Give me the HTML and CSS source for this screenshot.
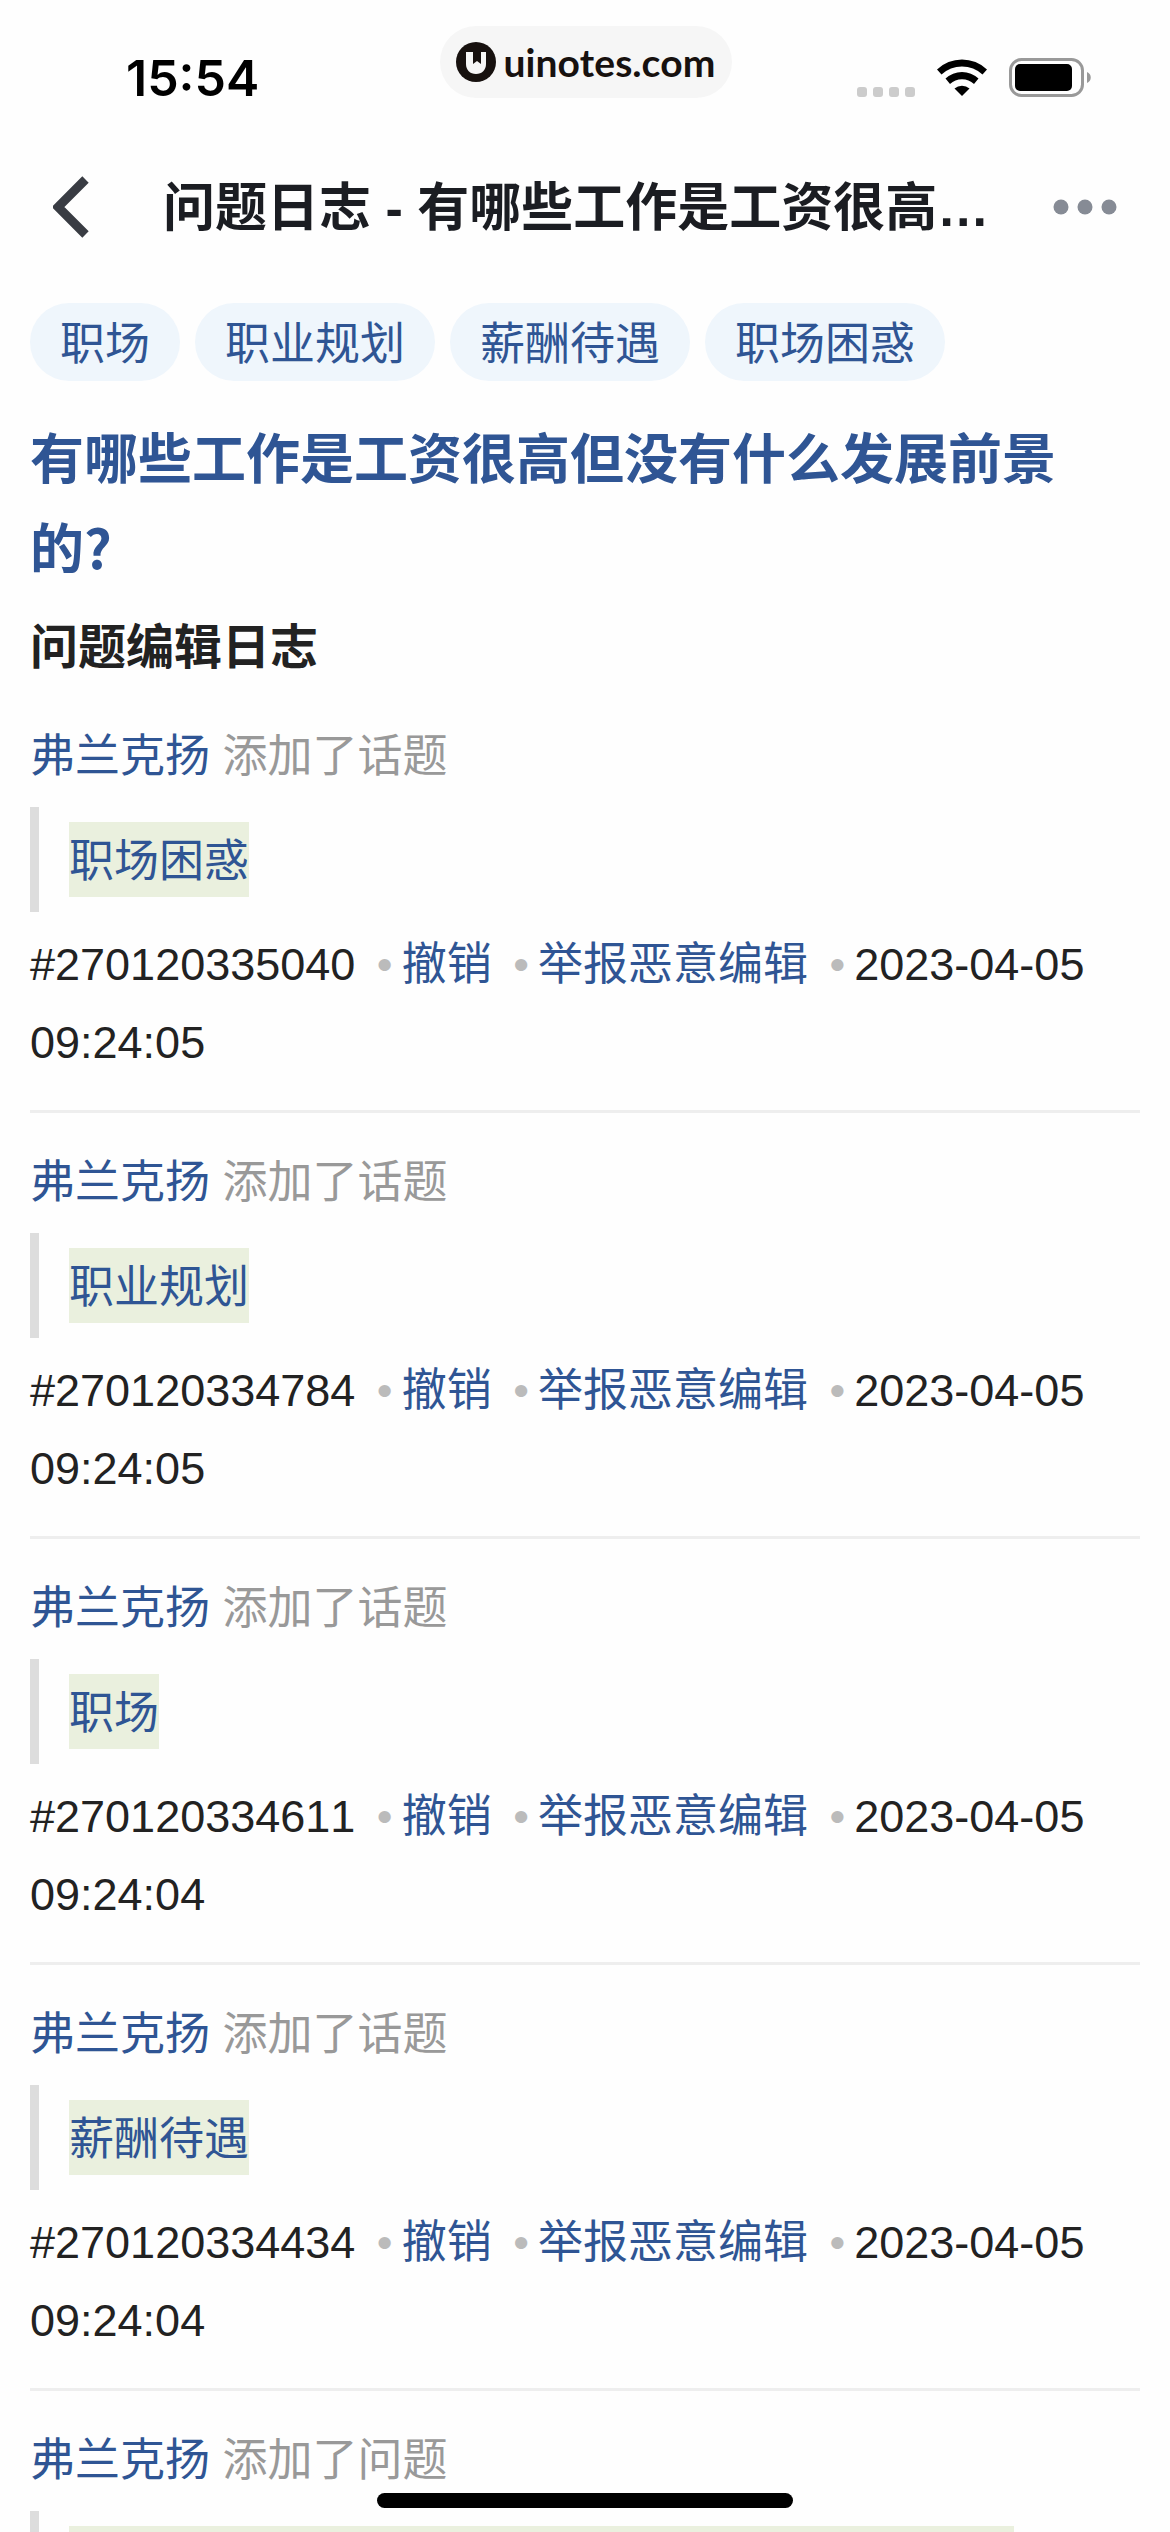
FILE: index.html
```html
<!DOCTYPE html>
<html lang="zh-CN">
<head>
    <meta charset="UTF-8">
    <meta name="viewport" content="width=device-width, initial-scale=1.0">
    <title>问题日志</title>
    <link rel="stylesheet" href="styles.css">
</head>
<body>
    <div class="page">

        <div class="status-bar">
            <span class="time">15:54</span>
            <div class="watermark">
                <svg width="40" height="40" viewBox="0 0 40 40" aria-hidden="true">
                    <circle cx="20" cy="20" r="20" fill="#17110f"/>
                    <path d="M10 10h7v12l4-3 4 3V10h5v12c0 6-4 10-10 10s-10-4-10-10z" fill="#f6f6f6"/>
                </svg>
                <span>uinotes.com</span>
            </div>
            <div class="status-icons">
                <svg class="signal" width="58" height="10" viewBox="0 0 58 10" fill="#ccc">
                    <rect width="10" height="10" rx="3"/>
                    <rect x="16" width="10" height="10" rx="3"/>
                    <rect x="32" width="10" height="10" rx="3"/>
                    <rect x="48" width="10" height="10" rx="3"/>
                </svg>
                <svg width="50" height="37" viewBox="0 0 50 37">
                    <path d="M0 10.500a36 36 0 0 1 50 0l-4.500 5a30 30 0 0 0-41 0z"/>
                    <path d="M8.500 19.500a24 24 0 0 1 33 0l-4.500 5.500a17.500 17.500 0 0 0-24 0z"/>
                    <path d="M17.500 29.500a11.500 11.500 0 0 1 15 0L25 37z"/>
                </svg>
                <svg width="83" height="39" viewBox="0 0 83 39">
                    <rect x="1.500" y="1.500" width="72" height="36" rx="11" fill="none" stroke="#999" stroke-width="3"/>
                    <rect x="6" y="6" width="57" height="27" rx="5"/>
                    <path d="M78 14c5 2 5 9 0 11z" fill="#999"/>
                </svg>
            </div>
        </div>

        <header class="nav">
            <button class="back" aria-label="返回">
                <svg width="36" height="62" viewBox="0 0 36 62">
                    <path d="M32.500 3.500L5 31l27.500 27.500" fill="none" stroke="#393c43" stroke-width="9"/>
                </svg>
            </button>
            <h1 class="nav-title">问题日志 - 有哪些工作是工资很高但没有什么发展前景的?</h1>
            <button class="more" aria-label="更多">
                <svg width="64" height="16" viewBox="0 0 64 16" fill="#868b95">
                    <circle cx="8" cy="8" r="7.500"/>
                    <circle cx="32" cy="8" r="7.500"/>
                    <circle cx="56" cy="8" r="7.500"/>
                </svg>
            </button>
        </header>

        <main class="content">
            <div class="tags">
                <a class="tag" href="#">职场</a>
                <a class="tag" href="#">职业规划</a>
                <a class="tag" href="#">薪酬待遇</a>
                <a class="tag" href="#">职场困惑</a>
            </div>

            <h2 class="question"><a href="#">有哪些工作是工资很高但没有什么发展前景的?</a></h2>
            <h3 class="subtitle">问题编辑日志</h3>

            <div class="log">
                <p class="action"><a href="#">弗兰克扬</a> 添加了话题</p>
                <div class="change"><ins><a href="#">职场困惑</a></ins></div>
                <p class="meta">#270120335040 <span class="dot">•</span><a href="#">撤销</a> <span class="dot">•</span><a href="#">举报恶意编辑</a> <span class="dot">•</span><time>2023-04-05 09:24:05</time></p>
            </div>

            <div class="log">
                <p class="action"><a href="#">弗兰克扬</a> 添加了话题</p>
                <div class="change"><ins><a href="#">职业规划</a></ins></div>
                <p class="meta">#270120334784 <span class="dot">•</span><a href="#">撤销</a> <span class="dot">•</span><a href="#">举报恶意编辑</a> <span class="dot">•</span><time>2023-04-05 09:24:05</time></p>
            </div>

            <div class="log">
                <p class="action"><a href="#">弗兰克扬</a> 添加了话题</p>
                <div class="change"><ins><a href="#">职场</a></ins></div>
                <p class="meta">#270120334611 <span class="dot">•</span><a href="#">撤销</a> <span class="dot">•</span><a href="#">举报恶意编辑</a> <span class="dot">•</span><time>2023-04-05 09:24:04</time></p>
            </div>

            <div class="log">
                <p class="action"><a href="#">弗兰克扬</a> 添加了话题</p>
                <div class="change"><ins><a href="#">薪酬待遇</a></ins></div>
                <p class="meta">#270120334434 <span class="dot">•</span><a href="#">撤销</a> <span class="dot">•</span><a href="#">举报恶意编辑</a> <span class="dot">•</span><time>2023-04-05 09:24:04</time></p>
            </div>

            <div class="log">
                <p class="action"><a href="#">弗兰克扬</a> 添加了问题</p>
                <div class="change"><ins>有哪些工作是工资很高但没有什么发展前景的？</ins></div>
            </div>
        </main>

        <div class="home-indicator"></div>
    </div>
</body>
</html>
```
FILE: styles.css
```css
* {
    margin: 0;
    padding: 0;
    box-sizing: border-box;
}

body {
    background: #fefefe;
    color: #222;
    font-family: "Liberation Sans", "Noto Sans CJK SC", sans-serif;
    font-size: 45px;
    font-kerning: none;
    line-height: 78px;
}

a {
    color: #2f5594;
    text-decoration: none;
}

button {
    border: none;
    background: none;
    cursor: pointer;
}

svg {
    display: block;
}

.page {
    height: 100vh;
    overflow: hidden;
}

/* status bar */
.status-bar {
    display: grid;
    grid-template-columns: 1fr auto 1fr;
    align-items: start;
    height: 141px;
    padding: 26px 78px 0 126px;
}

.time {
    padding-top: 16px;
    color: #000;
    font-family: Inter, sans-serif;
    font-size: 50px;
    font-weight: 600;
    line-height: 72px;
}

.watermark {
    display: flex;
    align-items: center;
    gap: 8px;
    height: 72px;
    margin-right: 46px;
    padding: 0 17px 0 16px;
    border-radius: 36px;
    background: #f6f6f6;
    color: #17110f;
    font-family: Lato, sans-serif;
    font-size: 39px;
    font-weight: 700;
    line-height: 72px;
}

.status-icons {
    display: flex;
    justify-content: flex-end;
    align-items: center;
    gap: 22px;
    padding-top: 32px;
}

.signal {
    align-self: flex-end;
}

/* navigation */
.nav {
    display: flex;
    align-items: center;
    height: 132px;
    padding: 0 53px;
}

.nav-title {
    flex: 1;
    min-width: 0;
    margin: 0 48px 0 74px;
    padding-top: 2px;
    overflow: hidden;
    color: #1b1d22;
    font-size: 52px;
    font-weight: 600;
    white-space: nowrap;
    text-overflow: ellipsis;
}

/* content */
.content {
    padding: 30px;
}

.tags {
    display: flex;
    gap: 15px;
    margin-bottom: 30px;
}

.tag {
    padding: 6px 30px 0;
    border-radius: 39px;
    background: #eff6fc;
    line-height: 72px;
}

.question {
    padding-right: 30px;
    font-family: "Noto Sans CJK SC", sans-serif;
    font-size: 54px;
    font-weight: 600;
    line-height: 90px;
}

.subtitle {
    margin: 21px 0 32px;
    font-size: 48px;
    font-weight: 600;
    line-height: 72px;
}

.log {
    margin-bottom: 27px;
    padding-bottom: 28px;
    border-bottom: 3px solid #eee;
}

.action {
    padding-top: 4px;
    color: #999;
}

.subtitle + .log {
    margin-top: -2px;
}

.change {
    margin: 11px 0 14px;
    padding: 15px 30px;
    border-left: 9px solid #ddd;
    line-height: 71px;
}

.change ins {
    display: block;
    width: fit-content;
    padding-top: 4px;
    background: #eaf0de;
    text-decoration: none;
}

.dot {
    margin: 0 9px;
    color: #bbb;
}

.home-indicator {
    position: fixed;
    bottom: 24px;
    left: 50%;
    width: 416px;
    height: 15px;
    margin-left: -208px;
    border-radius: 8px;
    background: #000;
}
```
